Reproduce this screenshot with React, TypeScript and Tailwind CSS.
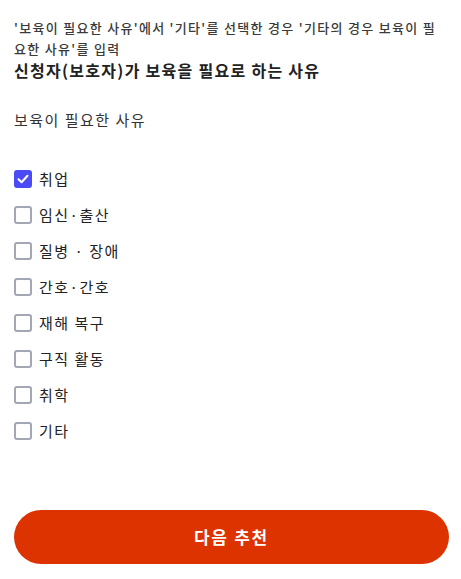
import React, { useState } from "react";

const items = ["취업", "임신·출산", "질병 · 장애", "간호·간호", "재해 복구", "구직 활동", "취학", "기타"];

export default function App() {
  const [checked, setChecked] = useState<boolean[]>(items.map((_, i) => i === 0));
  return (
    <div
      className="w-[461px] h-[579px] bg-white flex flex-col pl-[14px] pr-[12px]"
      style={{ fontFamily: '"Noto Sans CJK KR", "Noto Sans", sans-serif' }}
    >
      <p className="mt-[17px] text-[13px] leading-[21px] tracking-[0.1em] text-[#3a3a3a] font-medium pr-[4px]">
        '보육이 필요한 사유'에서 '기타'를 선택한 경우 '기타의 경우 보육이 필요한 사유'를 입력
      </p>
      <h2 className="mt-[-1px] text-[16px] leading-[24px] tracking-[0.08em] font-bold text-[#222]">
        신청자(보호자)가 보육을 필요로 하는 사유
      </h2>
      <p className="mt-[26px] text-[15px] leading-[24px] tracking-[0.1em] text-[#333]">보육이 필요한 사유</p>
      <div className="mt-[38px] flex flex-col gap-[18px]">
        {items.map((label, i) => (
          <label key={label} className="flex items-center gap-[7px] h-[18px] cursor-pointer">
            <span
              onClick={() => setChecked((c) => c.map((v, j) => (j === i ? !v : v)))}
              className={
                checked[i]
                  ? "w-[18px] h-[18px] rounded-[3px] bg-[#4b4bf5] flex items-center justify-center"
                  : "w-[18px] h-[18px] rounded-[3px] border-2 border-[#a3a6b4] bg-white"
              }
            >
              {checked[i] && (
                <svg width="14" height="14" viewBox="0 0 14 14" fill="none">
                  <path d="M2.5 7.2 L5.6 10.2 L11.5 3.8" stroke="white" strokeWidth="2" strokeLinecap="round" strokeLinejoin="round" />
                </svg>
              )}
            </span>
            <span className="text-[15px] leading-[18px] tracking-[0.1em] text-[#222]">{label}</span>
          </label>
        ))}
      </div>
      <button className="mt-[70px] w-full h-[54px] rounded-full bg-[#dd3300] text-white text-[17px] tracking-[0.1em] font-bold">
        다음 추천
      </button>
    </div>
  );
}
